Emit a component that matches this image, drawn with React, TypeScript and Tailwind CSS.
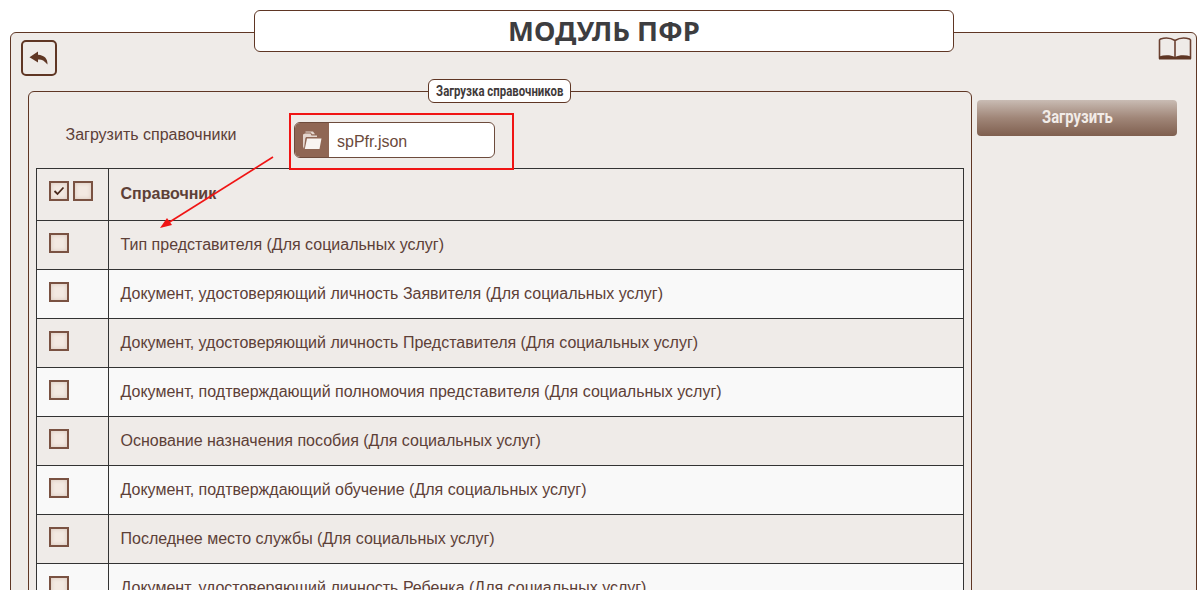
import React from "react";

const rows = [
  "Тип представителя (Для социальных услуг)",
  "Документ, удостоверяющий личность Заявителя (Для социальных услуг)",
  "Документ, удостоверяющий личность Представителя (Для социальных услуг)",
  "Документ, подтверждающий полномочия представителя (Для социальных услуг)",
  "Основание назначения пособия (Для социальных услуг)",
  "Документ, подтверждающий обучение (Для социальных услуг)",
  "Последнее место службы (Для социальных услуг)",
  "Документ, удостоверяющий личность Ребенка (Для социальных услуг)",
];

function Box({ checked }: { checked?: boolean }) {
  return (
    <span className="flex h-[20px] w-[20px] items-center justify-center border-2 border-[#7a5242] bg-[#f3e9e2] shadow-[inset_0_0_4px_#d8c6ba]">
      {checked && (
        <svg width="12" height="10" viewBox="0 0 12 10" fill="none">
          <path d="M1.500 5l3 3 6-6.500" stroke="#4a2a1c" strokeWidth="1.800" />
        </svg>
      )}
    </span>
  );
}

export default function App() {
  return (
    <div className="relative h-[590px] w-[1203px] overflow-hidden bg-white font-['Liberation_Sans',Arial,sans-serif] text-[16px] text-[#5d4037]">
      <div className="relative z-10 ml-[254px] mt-[10px] flex h-[42px] w-[700px] items-center justify-center rounded-[6px] border border-[#5f3624] bg-white font-['Noto_Sans',sans-serif] text-[27.500px] font-bold text-[#3d3d40]">
        МОДУЛЬ ПФР
      </div>
      <div className="relative mx-[10px] -mt-[20px] h-[600px] w-[1187px] rounded-[6px] border border-[#5f3624] bg-[#efebe8] pl-[10px] pt-[7px]">
        <div className="flex items-start justify-between pr-[4px]">
          <button className="flex h-[36px] w-[36px] items-center justify-center rounded-[5px] border-2 border-[#5f3624]">
            <svg width="20" height="14" viewBox="0 0 20 14">
              <path d="M9 .5L.5 6.300 9 11.500V8.500c3.500-.3 6 .8 9.500 5 .3-6-3.200-9.300-9.500-9.800z" fill="#5f3624" />
            </svg>
          </button>
          <svg width="34" height="23" viewBox="0 0 34 23" fill="none" className="mt-[-3px]">
            <path d="M17 3.500C13 1 7 .5 2.500 2L1.500 3V21H32.500V3L31.500 2C27 .5 21 1 17 3.500zM17 3.500V20.500" stroke="#6b4030" strokeWidth="1.600" />
            <path d="M1 19.500C7 17.500 13 18 17 20 21 18 27 17.500 33 19.500V22.500H1z" fill="#5f3624" />
          </svg>
        </div>
        <div className="mt-[15px] flex items-start gap-[5px] pl-[7px]">
          <div className="relative h-[600px] w-[944px] rounded-[6px] border border-[#5f3624] px-[7px]">
            <div className="absolute left-[399px] top-[-13px] flex h-[24px] w-[143px] items-center justify-center overflow-hidden rounded-[6px] border border-[#5f3624] bg-white font-['Roboto',sans-serif] text-[15px] font-bold text-[#3f3a3a]">
              <span className="inline-block scale-x-[0.76] whitespace-nowrap">Загрузка справочников</span>
            </div>
            <div className="flex h-[76px] items-start">
              <span className="ml-[29.500px] mt-[34px] w-[228.500px] leading-[18px]">Загрузить справочники</span>
              <div className="mt-[30px] flex h-[36px] w-[201px] overflow-hidden rounded-[6px] border border-[#6d4b3c] bg-white">
                <span className="flex w-[34px] items-center justify-center bg-[#8f6654]">
                  <svg width="20" height="20" viewBox="0 0 20 20">
                    <path d="M1 4.500V16.500l1 2.300 1.300-10.300c.2-1 .7-1.500 1.500-1.500H15V5.500H9.500L8.500 3.500H3z" fill="#e4d6ce" />
                    <path d="M3.500 1.500H11l2 2.800H10L8.800 2.600H3.500z" fill="#e4d6ce" />
                    <path d="M5 8.500H19.500L17.500 19H2.800z" fill="#f8f4f1" />
                  </svg>
                </span>
                <span className="pl-[8px] leading-[37px] text-[#6b4a3b]">spPfr.json</span>
              </div>
            </div>
            <table className="w-[928px] table-fixed border-collapse">
              <thead>
                <tr className="h-[52px]">
                  <th className="w-[72px] border border-[#333] pl-[12px] text-left align-middle">
                    <span className="flex gap-[4px] pb-[7px]">
                      <Box checked />
                      <Box />
                    </span>
                  </th>
                  <th className="border border-[#333] pl-[11.500px] pr-[12px] pb-[2px] text-left font-bold">Справочник</th>
                </tr>
              </thead>
              <tbody>
                {rows.map((r, i) => (
                  <tr key={r} className={i % 2 === 0 ? "h-[49px]" : "h-[49px] bg-[#f9f9f9]"}>
                    <td className="border border-[#333] pl-[12px] align-middle">
                      <span className="flex pb-[4px]">
                        <Box />
                      </span>
                    </td>
                    <td className="border border-[#333] pl-[11.500px] pr-[12px]">{r}</td>
                  </tr>
                ))}
              </tbody>
            </table>
          </div>
          <button className="mt-[9px] flex h-[36px] w-[200px] items-center justify-center overflow-hidden rounded-[4px] bg-gradient-to-b from-[#c9bcb4] via-[#a08678] to-[#7f5f4f] pb-[2px] font-['Roboto',sans-serif] text-[19px] font-bold text-[#f2ece8]">
            <span className="inline-block scale-x-[0.78]">Загрузить</span>
          </button>
        </div>
      </div>
      <div className="absolute left-[288.500px] top-[113px] h-[57px] w-[225px] border-2 border-[#f01414]" />
      <svg className="absolute left-0 top-0" width="1203" height="590" fill="none">
        <path d="M273 157L168 223" stroke="#f01414" strokeWidth="1.600" />
        <path d="M160 228L172 225L167 218z" fill="#f01414" />
      </svg>
    </div>
  );
}
